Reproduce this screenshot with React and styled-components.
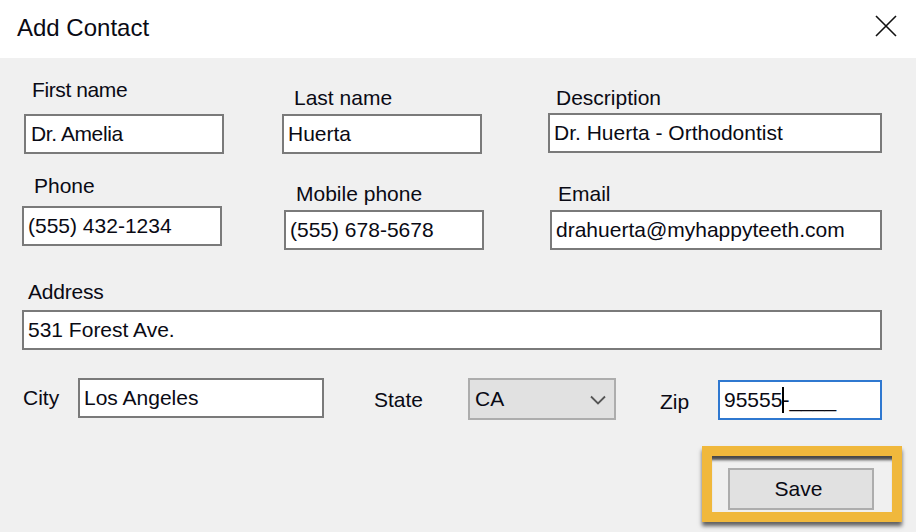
import React from "react";
import styled, { createGlobalStyle } from "styled-components";

const Global = createGlobalStyle`
  html, body { margin: 0; padding: 0; background: #f0f0f0; }
  * { box-sizing: border-box; }
`;
const Dialog = styled.div`
  width: 916px; height: 532px; overflow: hidden;
  background: #f0f0f0; color: #0a0a14;
  font-family: "Liberation Sans", Arial, sans-serif; font-size: 21px;
`;
const TitleBar = styled.header`
  height: 58px; background: #fff; display: flex; align-items: center;
  justify-content: space-between; padding: 0 19px 3px 17px;
`;
const Title = styled.h1`
  margin: 0; font-size: 24px; font-weight: 400; line-height: 28px;
`;
const CloseIcon = styled.svg`
  width: 22px; height: 22px; display: block; margin-top: -3px;
`;
const Body = styled.main`
  display: flex; flex-direction: column; padding-top: 20px;
`;
const Row = styled.div`
  display: flex; align-items: ${p => p.$align || "flex-end"};
  margin-top: ${p => p.$top || 0}px;
`;
const Field = styled.div`
  display: flex; flex-direction: column;
  width: ${p => p.$w}px; margin-left: ${p => p.$left}px; margin-bottom: ${p => p.$lift || 0}px;
`;
const Label = styled.label`
  display: block; height: 24px; line-height: 24px; padding-left: ${p => p.$indent}px;
  margin-bottom: ${p => p.$gap}px; white-space: nowrap;
  letter-spacing: ${p => p.$track || 0}px;
`;
const TextBox = styled.input`
  display: block; width: ${p => p.$w ? p.$w + "px" : "100%"}; height: 40px;
  border: 2px solid #7a7a7a; background: #fff; padding: 0 4px 0 ${p => p.$pad || 4}px;
  font: inherit; color: inherit; outline: none;
  letter-spacing: ${p => p.$track || 0}px;
`;
const InlineLabel = styled.span`
  width: ${p => p.$w}px; height: 24px; line-height: 24px; white-space: nowrap;
  margin-left: ${p => p.$left}px; margin-top: ${p => p.$top}px;
`;
const Select = styled.div`
  width: 148px; height: 42px;
  display: flex; align-items: center; justify-content: space-between;
  background: #e1e1e1; border: 2px solid #adadad; padding: 0 8px 0 5px;
`;
const Chevron = styled.svg`
  width: 16px; height: 10px; display: block; margin-top: 1px;
`;
const ZipBox = styled.div`
  width: 164px; height: 40px; margin-top: 2px;
  display: flex; align-items: center; background: #fff;
  border: 2px solid #2f78d0; padding: 0 0 0 4px; line-height: 24px;
`;
const Typed = styled.span`
  position: relative;
`;
const Caret = styled.span`
  position: absolute; right: -2px; top: -1px;
  width: 2px; height: 26px; background: #000;
`;
const Footer = styled.div`
  display: flex; justify-content: flex-end; padding-right: 14px; margin-top: 26px;
`;
const Highlight = styled.div`
  width: 200px; height: 76px; border: 10px solid #f0b83c; padding: 12px 0 0 16px;
  box-shadow: 0 4px 4px rgba(0,0,0,.6), inset 0 6px 3px -2px rgba(0,0,0,.7);
`;
const SaveButton = styled.button`
  display: block; width: 146px; height: 42px; background: #e1e1e1;
  border: 2px solid #adadad; font: inherit; color: inherit; padding: 0 5px 0 0;
`;

export default function App() {
  return (
    <Dialog>
      <Global />
      <TitleBar>
        <Title>Add Contact</Title>
        <CloseIcon viewBox="0 0 22 22" aria-label="Close">
          <path d="M1 1 L21 21 M21 1 L1 21" stroke="#111" strokeWidth="1.6" fill="none" />
        </CloseIcon>
      </TitleBar>
      <Body>
        <Row>
          <Field $left={24} $w={200}>
            <Label $indent={8} $gap={12} $track={-0.4}>First name</Label>
            <TextBox $pad={5} $track={-0.4} defaultValue="Dr. Amelia" />
          </Field>
          <Field $left={58} $w={200}>
            <Label $indent={12} $gap={4}>Last name</Label>
            <TextBox defaultValue="Huerta" />
          </Field>
          <Field $left={66} $w={334} $lift={1}>
            <Label $indent={8} $gap={3}>Description</Label>
            <TextBox defaultValue="Dr. Huerta - Orthodontist" />
          </Field>
        </Row>
        <Row $top={20}>
          <Field $left={22} $w={200} $lift={4}>
            <Label $indent={12} $gap={8}>Phone</Label>
            <TextBox defaultValue="(555) 432-1234" />
          </Field>
          <Field $left={62} $w={200}>
            <Label $indent={12} $gap={4}>Mobile phone</Label>
            <TextBox defaultValue="(555) 678-5678" />
          </Field>
          <Field $left={66} $w={332}>
            <Label $indent={8} $gap={4}>Email</Label>
            <TextBox defaultValue="drahuerta@myhappyteeth.com" />
          </Field>
        </Row>
        <Row $top={30}>
          <Field $left={22} $w={860}>
            <Label $indent={6} $gap={6} $track={-0.2}>Address</Label>
            <TextBox defaultValue="531 Forest Ave." />
          </Field>
        </Row>
        <Row $top={28} $align="flex-start">
          <InlineLabel $left={23} $w={55} $top={8}>City</InlineLabel>
          <TextBox $w={246} defaultValue="Los Angeles" />
          <InlineLabel $left={50} $w={94} $top={10}>State</InlineLabel>
          <Select>
            <span>CA</span>
            <Chevron viewBox="0 0 16 10"><path d="M1 1.5 L8 8.5 L15 1.5" stroke="#555" strokeWidth="1.8" fill="none" /></Chevron>
          </Select>
          <InlineLabel $left={44} $w={58} $top={12}>Zip</InlineLabel>
          <ZipBox>
            <Typed>95555<Caret /></Typed>-____
          </ZipBox>
        </Row>
        <Footer>
          <Highlight>
            <SaveButton>Save</SaveButton>
          </Highlight>
        </Footer>
      </Body>
    </Dialog>
  );
}
